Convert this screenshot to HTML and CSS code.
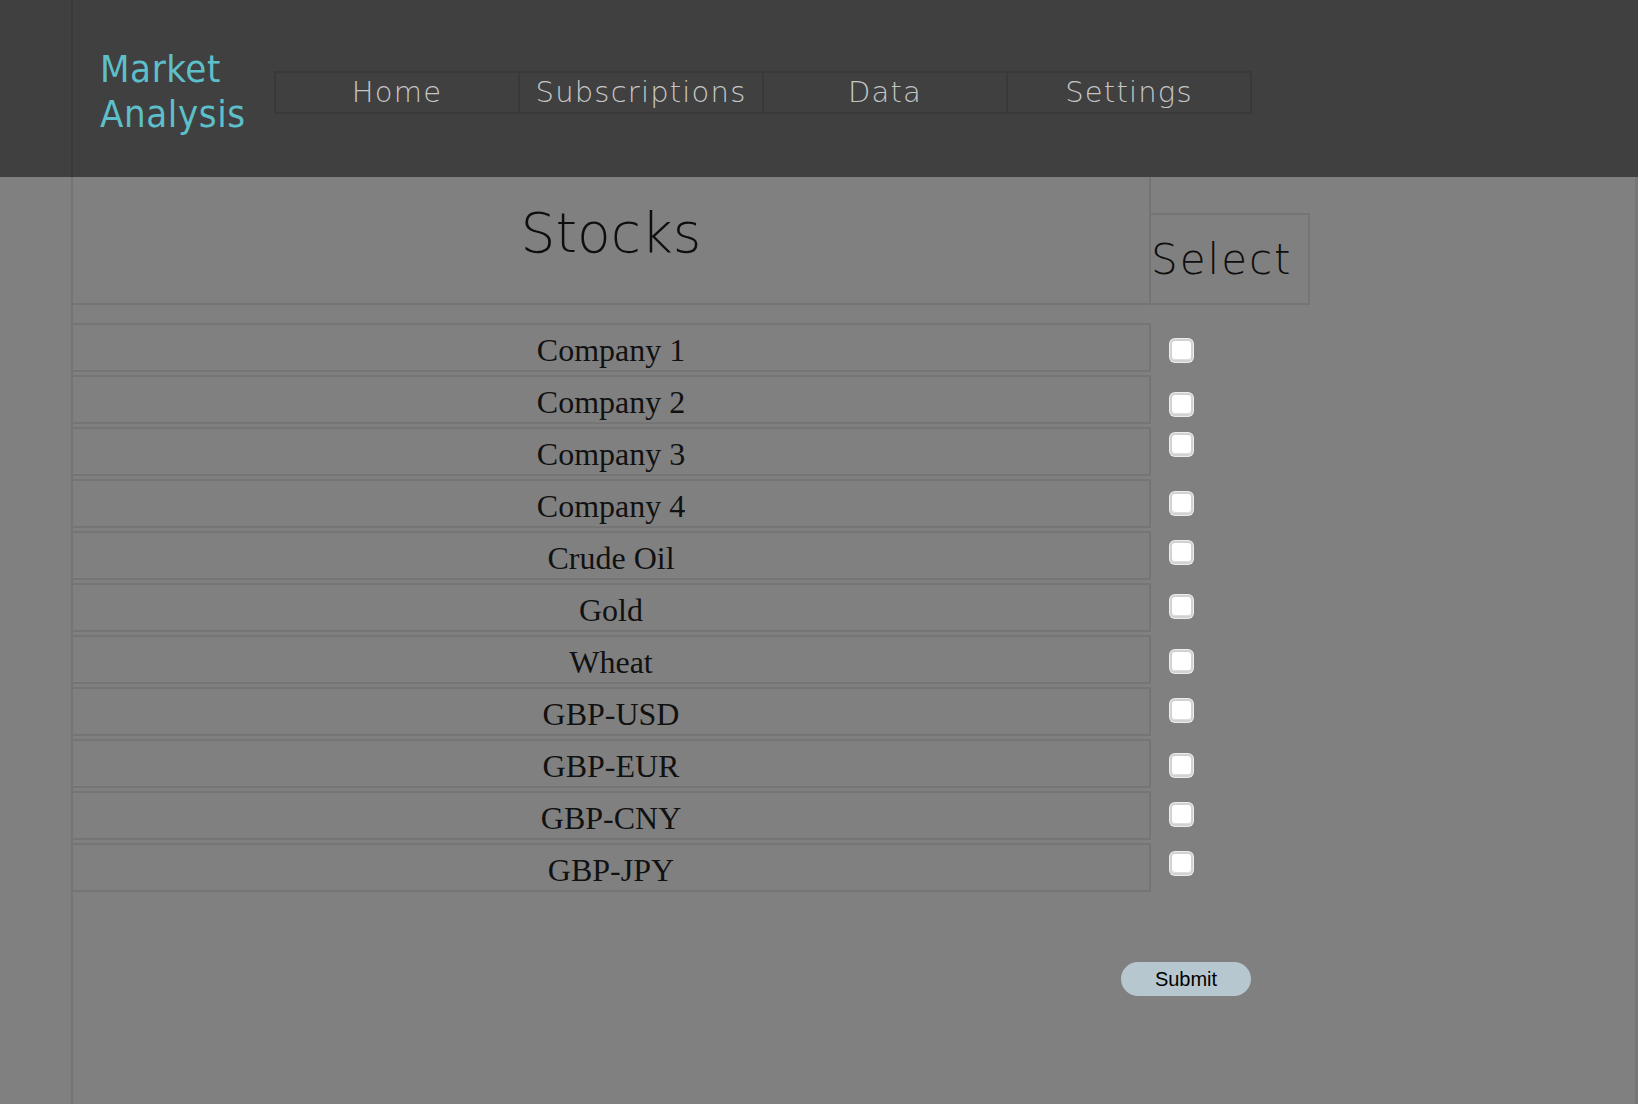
FILE: index.html
```html
<!DOCTYPE html>
<html lang="en">
<head>
<meta charset="utf-8">
<title>Market Analysis - Stocks</title>
<link rel="stylesheet" href="styles.css">
</head>
<body>
<header class="topbar">
  <div class="brand">Market<br>Analysis</div>
  <nav class="nav">
    <a class="nav-item" href="#">Home</a>
    <a class="nav-item" href="#">Subscriptions</a>
    <a class="nav-item" href="#">Data</a>
    <a class="nav-item" href="#">Settings</a>
  </nav>
</header>
<main class="content">
  <form class="picker">
    <div class="grid">
      <section class="stocks">
        <div class="stocks-head"><h1 class="stocks-title">Stocks</h1></div>
        <ul class="stock-list">
          <li class="stock-row">Company 1</li>
          <li class="stock-row">Company 2</li>
          <li class="stock-row">Company 3</li>
          <li class="stock-row">Company 4</li>
          <li class="stock-row">Crude Oil</li>
          <li class="stock-row">Gold</li>
          <li class="stock-row">Wheat</li>
          <li class="stock-row">GBP-USD</li>
          <li class="stock-row">GBP-EUR</li>
          <li class="stock-row">GBP-CNY</li>
          <li class="stock-row">GBP-JPY</li>
        </ul>
      </section>
      <section class="select-col">
        <div class="select-head"><h2 class="select-title">Select</h2></div>
        <div class="checks">
          <input type="checkbox" class="check" aria-label="Company 1">
          <input type="checkbox" class="check" aria-label="Company 2">
          <input type="checkbox" class="check" aria-label="Company 3">
          <input type="checkbox" class="check" aria-label="Company 4">
          <input type="checkbox" class="check" aria-label="Crude Oil">
          <input type="checkbox" class="check" aria-label="Gold">
          <input type="checkbox" class="check" aria-label="Wheat">
          <input type="checkbox" class="check" aria-label="GBP-USD">
          <input type="checkbox" class="check" aria-label="GBP-EUR">
          <input type="checkbox" class="check" aria-label="GBP-CNY">
          <input type="checkbox" class="check" aria-label="GBP-JPY">
        </div>
      </section>
    </div>
    <div class="actions">
      <button type="button" class="submit">Submit</button>
    </div>
  </form>
</main>
</body>
</html>
```
FILE: styles.css
```css
html, body {
  margin: 0;
  padding: 0;
}

body {
  background: #808080;
  font-family: "DejaVu Sans", sans-serif;
  min-height: 100vh;
}

.topbar {
  height: 177px;
  box-sizing: border-box;
  padding-top: 7px;
  display: flex;
  align-items: center;
  background: linear-gradient(90deg, #404040 71px, #3a3a3a 71px, #3a3a3a 73px, #404040 73px);
}

.brand {
  margin-left: 100px;
  width: 174px;
  font-family: "DejaVu Sans Condensed", "DejaVu Sans", sans-serif;
  font-stretch: condensed;
  font-size: 38px;
  line-height: 45px;
  letter-spacing: 0.6px;
  color: #5cbfc9;
}

.nav {
  display: flex;
  border: 2px solid #393939;
}

.nav-item {
  width: 242px;
  height: 39px;
  line-height: 39px;
  text-align: center;
  font-family: "DejaVu Sans", sans-serif;
  font-weight: 200;
  font-size: 29px;
  letter-spacing: 1.2px;
  color: #c6c6c6;
  text-decoration: none;
}

.nav-item + .nav-item {
  border-left: 2px solid #393939;
}

.content {
  margin-left: 71px;
  border-left: 2px solid #747474;
  border-right: 3px solid #777777;
  min-height: calc(100vh - 177px);
  box-sizing: border-box;
}

.picker {
  margin: 0;
}

.grid {
  display: flex;
  align-items: flex-start;
}

.stocks {
  width: 1078px;
}

.stocks-head {
  height: 128px;
  box-sizing: border-box;
  border-right: 2px solid #747474;
  border-bottom: 2px solid #747474;
  padding-top: 29px;
}

.stocks-title {
  margin: 0;
  text-align: center;
  font-family: "DejaVu Sans", sans-serif;
  font-weight: 200;
  font-size: 55px;
  line-height: 55px;
  color: #0e0e0e;
}

.stock-list {
  list-style: none;
  margin: 18px 0 0;
  padding: 0;
  display: flex;
  flex-direction: column;
  gap: 3px;
}

.stock-row {
  height: 49px;
  box-sizing: border-box;
  border: 2px solid #757575;
  border-left: none;
  line-height: 50px;
  text-align: center;
  font-family: "Liberation Serif", serif;
  font-size: 32px;
  color: #111111;
  overflow: hidden;
}

.select-col {
  width: 159px;
}

.select-head {
  margin-top: 36px;
  height: 92px;
  box-sizing: border-box;
  border: 2px solid #757575;
  border-left: none;
  padding-top: 24px;
}

.select-title {
  margin: 0;
  font-family: "DejaVu Sans", sans-serif;
  font-weight: 200;
  font-size: 42px;
  line-height: 42px;
  letter-spacing: 2px;
  color: #0e0e0e;
  white-space: nowrap;
}

.checks {
  display: flex;
  flex-direction: column;
  padding-left: 19px;
}

.check {
  -webkit-appearance: none;
  appearance: none;
  display: block;
  margin: 0;
  width: 23px;
  height: 23px;
  box-sizing: border-box;
  background: #ffffff;
  border: 2px solid #d2d2d2;
  border-radius: 5px;
  box-shadow: 0 0 0 1px #ececec, inset 0 -1px 0 #dddddd;
}

.check:nth-child(1) { margin-top: 34px; }
.check:nth-child(2) { margin-top: 31px; }
.check:nth-child(3) { margin-top: 17px; }
.check:nth-child(4) { margin-top: 36px; }
.check:nth-child(5) { margin-top: 26px; }
.check:nth-child(6) { margin-top: 31px; }
.check:nth-child(7) { margin-top: 32px; }
.check:nth-child(8) { margin-top: 26px; }
.check:nth-child(9) { margin-top: 32px; }
.check:nth-child(10) { margin-top: 26px; }
.check:nth-child(11) { margin-top: 26px; }

.actions {
  width: 1178px;
  display: flex;
  justify-content: flex-end;
  margin-top: 70px;
}

.submit {
  width: 130px;
  height: 34px;
  border: none;
  border-radius: 17px;
  background: #b7c7cf;
  font-family: "Liberation Sans", Arial, sans-serif;
  font-size: 20px;
  color: #000000;
  padding: 0;
  cursor: pointer;
}
```
